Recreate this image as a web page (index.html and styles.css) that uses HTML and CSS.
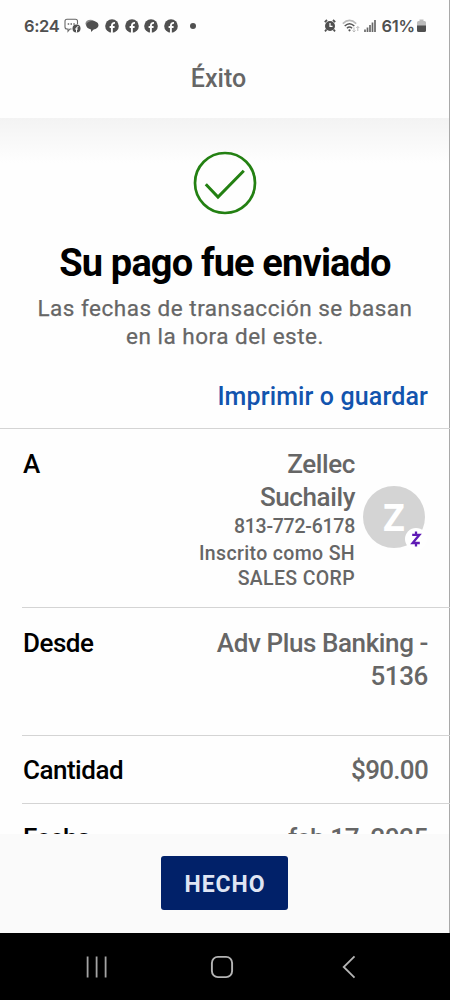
FILE: index.html
```
<!DOCTYPE html>
<html lang="es">
<head>
<meta charset="utf-8">
<title>Éxito</title>
<link rel="stylesheet" href="styles.css">
</head>
<body>
<svg class="defs" width="0" height="0" aria-hidden="true">
  <symbol id="fb" viewBox="0 0 14 14">
    <circle cx="7" cy="7" r="6.8" fill="#505050"/>
    <path d="M6.9 14V7.1C6.9 4.8 7.7 3.8 10 3.9M4.6 8h5" fill="none" stroke="#fdfdfd" stroke-width="1.9"/>
  </symbol>
</svg>
<div class="phone">
  <header class="status">
    <div class="status-left">
      <span class="clock">6:24</span>
      <svg class="chat" width="17" height="16" viewBox="0 0 17 16">
        <path d="M3 1.2h8.500q2 0 2 2v3M7.500 11H6l-2 2.300V11H3Q1 11 1 9V3.200q0-2 2-2" fill="none" stroke="#666" stroke-width="1.100"/>
        <path d="M3.700 6h1.500M6.500 6h1.500M9.300 6h1.500" stroke="#666" stroke-width="1.300"/>
        <circle cx="12.500" cy="10.500" r="4" fill="#505050"/>
        <path d="M12.500 14.500v-4q0-2 1.900-1.900M11 11h3" fill="none" stroke="#fff" stroke-width="1"/>
      </svg>
      <svg class="bubble" width="14" height="14" viewBox="0 0 14 14">
        <ellipse cx="5.500" cy="4.500" rx="5" ry="3.800" fill="#888"/>
        <path d="M7.500 2C11 2 13.500 3.800 13.500 6.300c0 2.200-2.200 3.900-4.800 4.200L6 13v-2.600C3.300 10 1.300 8.500 1.300 6.300 1.300 3.800 4 2 7.500 2z" fill="#505050"/>
      </svg>
      <svg class="fb" width="14" height="14"><use href="#fb"/></svg>
      <svg class="fb" width="14" height="14"><use href="#fb"/></svg>
      <svg class="fb" width="14" height="14"><use href="#fb"/></svg>
      <svg class="fb" width="14" height="14"><use href="#fb"/></svg>
      <span class="more"></span>
    </div>
    <div class="status-right">
      <svg width="12" height="13" viewBox="0 0 12 13">
        <circle cx="6" cy="7" r="5" fill="#505050"/>
        <path d="M.8 3.200 3 1M11.200 3.200 9 1M2.500 10.500 1 12.300M9.500 10.500l1.500 1.800" stroke="#505050" stroke-width="1.800"/>
        <path d="M6 4v3.300h2.500" fill="none" stroke="#fff" stroke-width="1.200"/>
      </svg>
      <svg class="wifi" width="18" height="14" viewBox="0 0 18 14">
        <path d="M.8 4.600Q7.500-1.800 14.200 4.600" fill="none" stroke="#bbb" stroke-width="1.600"/>
        <path d="M2.700 7Q7.500 2.400 12.300 7M4.900 9.200q2.600-2.400 5.200 0" fill="none" stroke="#555" stroke-width="1.500"/>
        <circle cx="7.500" cy="11.300" r="1.100" fill="#505050"/>
        <path d="M12 8.500v4.500M10.500 11.500 12 13l1.500-1.500M15.800 12V7.500M14.300 9l1.500-1.500L17.300 9" fill="none" stroke="#bbb"/>
      </svg>
      <svg class="signal" width="12" height="12" viewBox="0 0 12 12">
        <path d="M1 12V9.500M3.500 12V7.500M6 12V5M8.500 12V2.500M11 12V0" stroke="#686868" stroke-width="1.700"/>
      </svg>
      <span class="percent">61%</span>
      <svg class="battery" width="9" height="13" viewBox="0 0 9 13">
        <path d="M0 3.500Q0 2 1.500 2H2.500V.5h4V2h1Q9 2 9 3.500V7H0z" fill="#bcbcbc"/>
        <path d="M0 6.500h9v5Q9 13 7.500 13h-6Q0 13 0 11.500z" fill="#505050"/>
      </svg>
    </div>
  </header>
  <div class="appbar">Éxito</div>
  <main class="content">
    <section class="hero">
      <svg class="check" width="64" height="64" viewBox="0 0 64 64">
        <circle cx="32" cy="32" r="30" fill="none" stroke="#238012" stroke-width="2.700"/>
        <path d="M12.800 33.200 25 46 50.800 19.800" fill="none" stroke="#238012" stroke-width="3"/>
      </svg>
      <h1 class="title">Su pago fue enviado</h1>
      <p class="subtitle">Las fechas de transacción se basan<br>en la hora del este.</p>
      <a class="print">Imprimir o guardar</a>
    </section>
    <section class="row row-to">
      <span class="label">A</span>
      <div class="recipient">
        <div class="who">
          <div class="name">Zellec<br>Suchaily</div>
          <div class="phone-number">813-772-6178</div>
          <div class="enrolled">Inscrito como SH<br>SALES CORP</div>
        </div>
        <div class="avatar"><span class="initial">Z</span>
          <svg class="badge" width="22" height="22" viewBox="0 0 22 22">
            <circle cx="11" cy="11" r="11" fill="#fff"/>
            <path d="M7.200 6.800h7.200L7.600 15h7.200M11 3.500v3.300M11 15v3.600" fill="none" stroke="#5f1bb5" stroke-width="2.300"/>
          </svg>
        </div>
      </div>
    </section>
    <section class="row row-from">
      <span class="label">Desde</span>
      <span class="value bank">Adv Plus Banking -<br>5136</span>
    </section>
    <section class="row row-amount">
      <span class="label">Cantidad</span>
      <span class="value amount">$90.00</span>
    </section>
    <section class="row row-date">
      <span class="label">Fecha</span>
      <span class="value date">feb 17, 2025</span>
    </section>
  </main>
  <footer class="footer"><button class="done">HECHO</button></footer>
  <nav class="nav">
    <svg width="22" height="22" viewBox="0 0 22 22"><path d="M1.600.5v21M10.600.5v21M19.600.5v21" stroke="#a4a4a4" stroke-width="1.800"/></svg>
    <svg class="home" width="24" height="24" viewBox="0 0 24 24"><rect x="1.900" y="1.900" width="20.200" height="20.200" rx="6" fill="none" stroke="#b4b4b4" stroke-width="1.900"/></svg>
    <svg width="14" height="24" viewBox="0 0 14 24"><path d="M12.500 1.300 1.700 12l10.800 10.700" fill="none" stroke="#b4b4b4" stroke-width="1.800"/></svg>
  </nav>
</div>
</body>
</html>
```
FILE: styles.css
```
* { box-sizing: border-box; }
body { margin: 0; background: #fff; }
svg { display: block; flex: none; }
.defs { position: absolute; }
.phone {
  width: 450px;
  height: 1000px;
  display: flex;
  flex-direction: column;
  overflow: hidden;
  background: linear-gradient(#a9a9a9, #a9a9a9) right / 1px 100% no-repeat #fefefe;
  font-family: Roboto, sans-serif;
  font-weight: 500;
  color: #666;
}
.status {
  height: 50px;
  padding: 1px 24px 0;
  display: flex;
  justify-content: space-between;
  align-items: center;
  font: 600 16.5px/20px Inter, sans-serif;
  color: #505050;
}
.status-left, .status-right { display: flex; align-items: center; }
.clock { width: 40px; letter-spacing: -0.4px; }
.bubble { margin: 0 6px 0 4px; }
.fb { margin-right: 5.600px; }
.more { width: 6px; height: 6px; margin-left: 7px; border-radius: 50%; background: #505050; }
.wifi { margin: 0 4px 0 6px; }
.percent { margin: 0 2px 0 5px; letter-spacing: -0.2px; }
.appbar {
  height: 68px;
  padding-top: 13px;
  text-align: center;
  font-size: 25px;
  line-height: 32px;
  padding-right: 13px;
}
.content { flex: 1; min-height: 0; overflow: hidden; }
.hero {
  height: 310px;
  padding-top: 33px;
  display: flex;
  flex-direction: column;
  align-items: center;
  background: linear-gradient(#f3f3f3, rgba(254, 254, 254, 0) 45px) left / 449px 100% no-repeat;
}
.title {
  margin: 26px 0 0;
  font-size: 38px;
  line-height: 44px;
  font-weight: 700;
  letter-spacing: -0.85px;
  color: #000;
}
.subtitle {
  margin: 9px 0 0;
  text-align: center;
  font-size: 22.5px;
  line-height: 28px;
  font-weight: 400;
  letter-spacing: .5px;
  -webkit-text-stroke: .25px #666;
}
.print {
  align-self: flex-end;
  margin: 31px 22px 0 0;
  font-size: 25px;
  line-height: 32px;
  letter-spacing: .13px;
  color: #1254ae;
}
.row {
  display: flex;
  justify-content: space-between;
  align-items: flex-start;
  margin-left: 22px;
  padding: 19px 22px 0 1px;
  border-top: 1px solid #d4d4d4;
  font-size: 26px;
  line-height: 32.500px;
}
.label { color: #000; letter-spacing: -0.5px; }
.value, .who { text-align: right; }
.value, .name { letter-spacing: -0.4px; }
.amount { letter-spacing: -0.7px; }
.row-to { height: 179px; margin-left: 0; padding-left: 23px; padding-right: 25px; }
.recipient { display: flex; gap: 8px; }
.phone-number { font-size: 19.5px; line-height: 28px; letter-spacing: -.25px; }
.enrolled { font-size: 19.5px; line-height: 25px; letter-spacing: .35px; }
.avatar {
  position: relative;
  width: 62px;
  height: 62px;
  margin-top: 38px;
  border-radius: 50%;
  background: #d4d4d4;
  color: #fff;
  font: 700 37px/62px "Open Sans", sans-serif;
  text-align: center;
}
.badge { position: absolute; left: 42px; top: 42px; }
.row-from { height: 128px; }
.row-amount { height: 68px; padding-top: 18px; }
.row-date { padding-top: 18px; }
.footer {
  height: 99px;
  display: flex;
  align-items: flex-start;
  justify-content: center;
  padding: 22px 1px 0 0;
  background: linear-gradient(#fafafa, #fafafa) left / 449px 100% no-repeat;
}
.done {
  width: 127px;
  height: 54px;
  padding: 3px 0 0 1px;
  border: 0;
  border-radius: 3px;
  background: #012169;
  color: #dfe5f3;
  font: 700 23px/28px Roboto, sans-serif;
  letter-spacing: .9px;
}
.nav {
  height: 67px;
  display: flex;
  align-items: center;
  justify-content: space-between;
  padding: 0 94px 0 86px;
  background: #000;
}
.home { margin-right: 6px; }
```
